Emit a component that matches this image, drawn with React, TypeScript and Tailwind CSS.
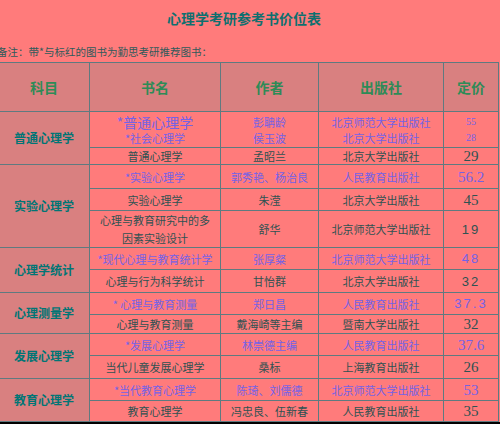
import React from "react";

type Row = {
  h: number;
  book: React.ReactNode;
  author: React.ReactNode;
  press: React.ReactNode;
  price: React.ReactNode;
  star?: boolean;
};

const PURPLE = "text-[#7462e6]";
const DARK = "text-[#2f5252]";

const serif = "font-['Liberation_Serif',serif] text-[15px] leading-[14px]";
const sansNum = "font-['Liberation_Sans',sans-serif] text-[13px] leading-[14px] tracking-[2px]";

const rows: { subject: string; items: Row[] }[] = [
  {
    subject: "普通心理学",
    items: [
      {
        h: 36,
        star: true,
        book: (
          <div>
            <div className="text-[14px] leading-[17px]">*普通心理学</div>
            <div className="text-[11px] leading-[15px]">*社会心理学</div>
          </div>
        ),
        author: (
          <div className="leading-[16px]">
            <div>彭聃龄</div>
            <div>侯玉波</div>
          </div>
        ),
        press: (
          <div className="leading-[16px]">
            <div>北京师范大学出版社</div>
            <div>北京大学出版社</div>
          </div>
        ),
        price: (
          <div className="font-['Liberation_Serif',serif] text-[10px] leading-[16px]">
            <div>55</div>
            <div>28</div>
          </div>
        ),
      },
      { h: 17, book: "普通心理学", author: "孟昭兰", press: "北京大学出版社", price: <span className={serif}>29</span> },
    ],
  },
  {
    subject: "实验心理学",
    items: [
      { h: 24, star: true, book: "*实验心理学", author: "郭秀艳、杨治良", press: "人民教育出版社", price: <span className={serif}>56.2</span> },
      { h: 22, book: "实验心理学", author: "朱滢", press: "北京大学出版社", price: <span className={serif}>45</span> },
      {
        h: 36,
        book: (
          <div className="leading-[18px]">
            心理与教育研究中的多
            <br />
            因素实验设计
          </div>
        ),
        author: "舒华",
        press: "北京师范大学出版社",
        price: <span className={sansNum + " text-[12px]"}>19</span>,
      },
    ],
  },
  {
    subject: "心理学统计",
    items: [
      { h: 22, star: true, book: "*现代心理与教育统计学", author: "张厚粲", press: "北京师范大学出版社", price: <span className={sansNum}>48</span> },
      { h: 23, book: "心理与行为科学统计", author: "甘怡群", press: "北京大学出版社", price: <span className={sansNum}>32</span> },
    ],
  },
  {
    subject: "心理测量学",
    items: [
      { h: 22, star: true, book: "* 心理与教育测量", author: "郑日昌", press: "人民教育出版社", price: <span className={sansNum}>37.3</span> },
      { h: 19, book: "心理与教育测量", author: "戴海崎等主编", press: "暨南大学出版社", price: <span className={serif}>32</span> },
    ],
  },
  {
    subject: "发展心理学",
    items: [
      { h: 22, star: true, book: "*发展心理学", author: "林崇德主编", press: "人民教育出版社", price: <span className={serif}>37.6</span> },
      { h: 23, book: "当代儿童发展心理学", author: "桑标", press: "上海教育出版社", price: <span className={serif}>26</span> },
    ],
  },
  {
    subject: "教育心理学",
    items: [
      { h: 22, star: true, book: "*当代教育心理学", author: "陈琦、刘儒德", press: "北京师范大学出版社", price: <span className={serif}>53</span> },
      { h: 21, book: "教育心理学", author: "冯忠良、伍新春", press: "人民教育出版社", price: <span className={serif}>35</span> },
    ],
  },
];

const td =
  "border border-[#5f7a80] text-center align-middle p-0 text-[11px] leading-[14px] whitespace-nowrap overflow-hidden";

export default function App() {
  return (
    <div className="w-[500px] h-[424px] overflow-hidden bg-[#ff7b7b] font-['Noto_Sans_CJK_SC',sans-serif]">
      <div className="h-[36px] flex items-center justify-center pr-[12px] text-[14px] font-bold text-[#0f6f6f]">
        心理学考研参考书价位表
      </div>
      <div className="mt-[8px] h-[16px] leading-[16px] -ml-[3px] text-[10.5px] text-[#2f5a5a]">
        备注：带*与标红的图书为勤思考研推荐图书：
      </div>
      <table className="mt-[2px] -ml-[2px] w-[500px] table-fixed border-collapse">
        <colgroup>
          <col className="w-[91px]" />
          <col className="w-[131px]" />
          <col className="w-[98px]" />
          <col className="w-[125px]" />
          <col className="w-[55px]" />
        </colgroup>
        <thead>
          <tr className="h-[49px] bg-[#d98080] text-[#2e8b57]">
            {["科目", "书名", "作者", "出版社", "定价"].map((t) => (
              <th key={t} className="border border-[#5f7a80] text-[14px] leading-[18px] font-bold p-0">
                {t}
              </th>
            ))}
          </tr>
        </thead>
        <tbody>
          {rows.map((g) =>
            g.items.map((r, i) => {
              const color = r.star ? PURPLE : DARK;
              return (
                <tr key={g.subject + i} style={{ height: r.h }}>
                  {i === 0 && (
                    <td
                      rowSpan={g.items.length}
                      className={td + " bg-[#d98080] text-[12px] font-bold text-[#007575]"}
                    >
                      {g.subject}
                    </td>
                  )}
                  <td className={td + " " + color}>{r.book}</td>
                  <td className={td + " " + color}>{r.author}</td>
                  <td className={td + " " + color}>{r.press}</td>
                  <td className={td + " " + color}>{r.price}</td>
                </tr>
              );
            })
          )}
        </tbody>
      </table>
      <div className="h-[10px] bg-black" />
    </div>
  );
}
